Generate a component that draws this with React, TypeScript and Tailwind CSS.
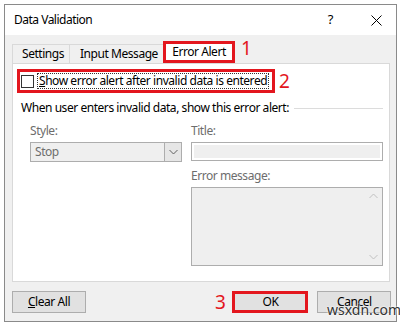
import React from "react";

const font = { fontFamily: '"Segoe UI", "Noto Sans", "Open Sans", sans-serif' };

function Chevron({ up = false, color = "#606060" }: { up?: boolean; color?: string }) {
  return (
    <svg width="9" height="6" viewBox="0 0 9 6">
      <path d={up ? "M0.5 5 L4.5 1 L8.5 5" : "M0.5 1 L4.5 5 L8.5 1"} fill="none" stroke={color} strokeWidth="1" />
    </svg>
  );
}

export default function App() {
  return (
    <div className="w-[400px] h-[324px] bg-white pt-[4px] pl-[4px] relative overflow-hidden tracking-[-0.45px]" style={font}>
      <div className="w-[393px] h-[318px] border border-[#8a8a8a] bg-[#f0f0f0] flex flex-col">
        {/* title bar */}
        <div className="h-[30px] bg-white flex items-center pl-[9px] text-[12px] text-black">
          <span className="tracking-[-0.5px]">Data Validation</span>
          <span className="ml-auto mr-[38px] text-[13px]">?</span>
          <svg width="11" height="11" viewBox="0 0 11 11" className="mr-[14px]">
            <path d="M0.5 0.5 L10.5 10.5 M10.5 0.5 L0.5 10.5" stroke="#000" strokeWidth="1" />
          </svg>
        </div>
        {/* tabs */}
        <div className="mt-[6px] ml-[7px] h-[22px] flex items-end text-[12px] text-black">
          <div className="w-[58px] h-[19px] pl-[9px] border-l border-t border-r border-[#d9d9d9] flex items-center">Settings</div>
          <div className="w-[93px] h-[19px] pl-[10px] border-t border-[#d9d9d9] flex items-center">Input Message</div>
          <div className="h-[22px] w-[72px] border-[3px] border-[#e3161e] bg-white flex items-center justify-center">Error Alert</div>
          <span className="ml-[6px] self-start -mt-[2px] text-[19px] leading-none text-[#e3161e]">1</span>
        </div>
        {/* panel */}
        <div className="ml-[7px] w-[378px] h-[219px] border border-[#d9d9d9] bg-white flex flex-col pl-[4px] pt-[5px] text-[12px]">
          <div className="flex items-center">
            <div className="w-[258px] h-[24px] border-[3px] border-[#e3161e] flex items-center pl-[1px]">
              <div className="w-[13px] h-[13px] border border-[#333] bg-white shrink-0" />
              <div className="ml-[3px] h-[16px] px-[1px] border border-dotted border-[#333] flex items-center leading-none text-black whitespace-nowrap">
                <span><span className="underline">S</span>how error alert after invalid data is entered</span>
              </div>
            </div>
            <span className="ml-[4px] text-[19px] leading-none text-[#e3161e]">2</span>
          </div>
          <div className="mt-[6px] ml-[4px] flex items-center text-black">
            <span className="whitespace-nowrap">When user enters invalid data, show this error alert:</span>
            <div className="ml-[5px] mr-[6px] flex-1 h-px bg-[#dcdcdc]" />
          </div>
          <div className="flex ml-[13px] mt-[7px] text-[#6d6d6d]">
            <div className="w-[152px] flex flex-col">
              <span className="leading-[14px]">Style:</span>
              <div className="mt-[4px] h-[20px] border border-[#adadad] bg-[#efefef] flex items-center">
                <span className="pl-[4px] flex-1">Stop</span>
                <div className="w-[17px] h-full border-l border-[#adadad] bg-[#e6e6e6] flex items-center justify-center">
                  <Chevron />
                </div>
              </div>
            </div>
            <div className="ml-[9px] w-[192px] flex flex-col">
              <span className="leading-[14px]">Title:</span>
              <div className="mt-[4px] h-[19px] border border-[#adadad] bg-white p-[2px]">
                <div className="w-full h-full bg-[#efefef]" />
              </div>
              <span className="mt-[8px] leading-[14px]">Error message:</span>
              <div className="mt-[4px] h-[79px] border border-[#adadad] bg-[#efefef] flex justify-end">
                <div className="w-[17px] h-full flex flex-col items-center justify-between py-[5px]">
                  <Chevron up color="#c0c0c0" />
                  <Chevron color="#c0c0c0" />
                </div>
              </div>
            </div>
          </div>
        </div>
        {/* buttons */}
        <div className="mt-[9px] ml-[7px] flex items-center text-[12px] text-black">
          <div className="w-[74px] h-[22px] border border-[#adadad] bg-[#e1e1e1] flex items-center justify-center">
            <span><span className="underline">C</span>lear All</span>
          </div>
          <span className="ml-[129px] text-[19px] leading-none text-[#e3161e]">3</span>
          <div className="ml-[7px] w-[76px] h-[22px] border-[3px] border-[#e3161e] bg-[#e1e1e1] flex items-center justify-center">
            OK
          </div>
          <div className="ml-[9px] w-[74px] h-[22px] border border-[#adadad] bg-[#e1e1e1] flex items-center justify-center">
            Cancel
          </div>
        </div>
      </div>
      <span
        className="absolute left-[327px] top-[303px] text-[14px] leading-none text-[#333] tracking-normal"
        style={{ textShadow: "0 0 2px #fff, 0 0 2px #fff" }}
      >
        wsxdn.com
      </span>
    </div>
  );
}
